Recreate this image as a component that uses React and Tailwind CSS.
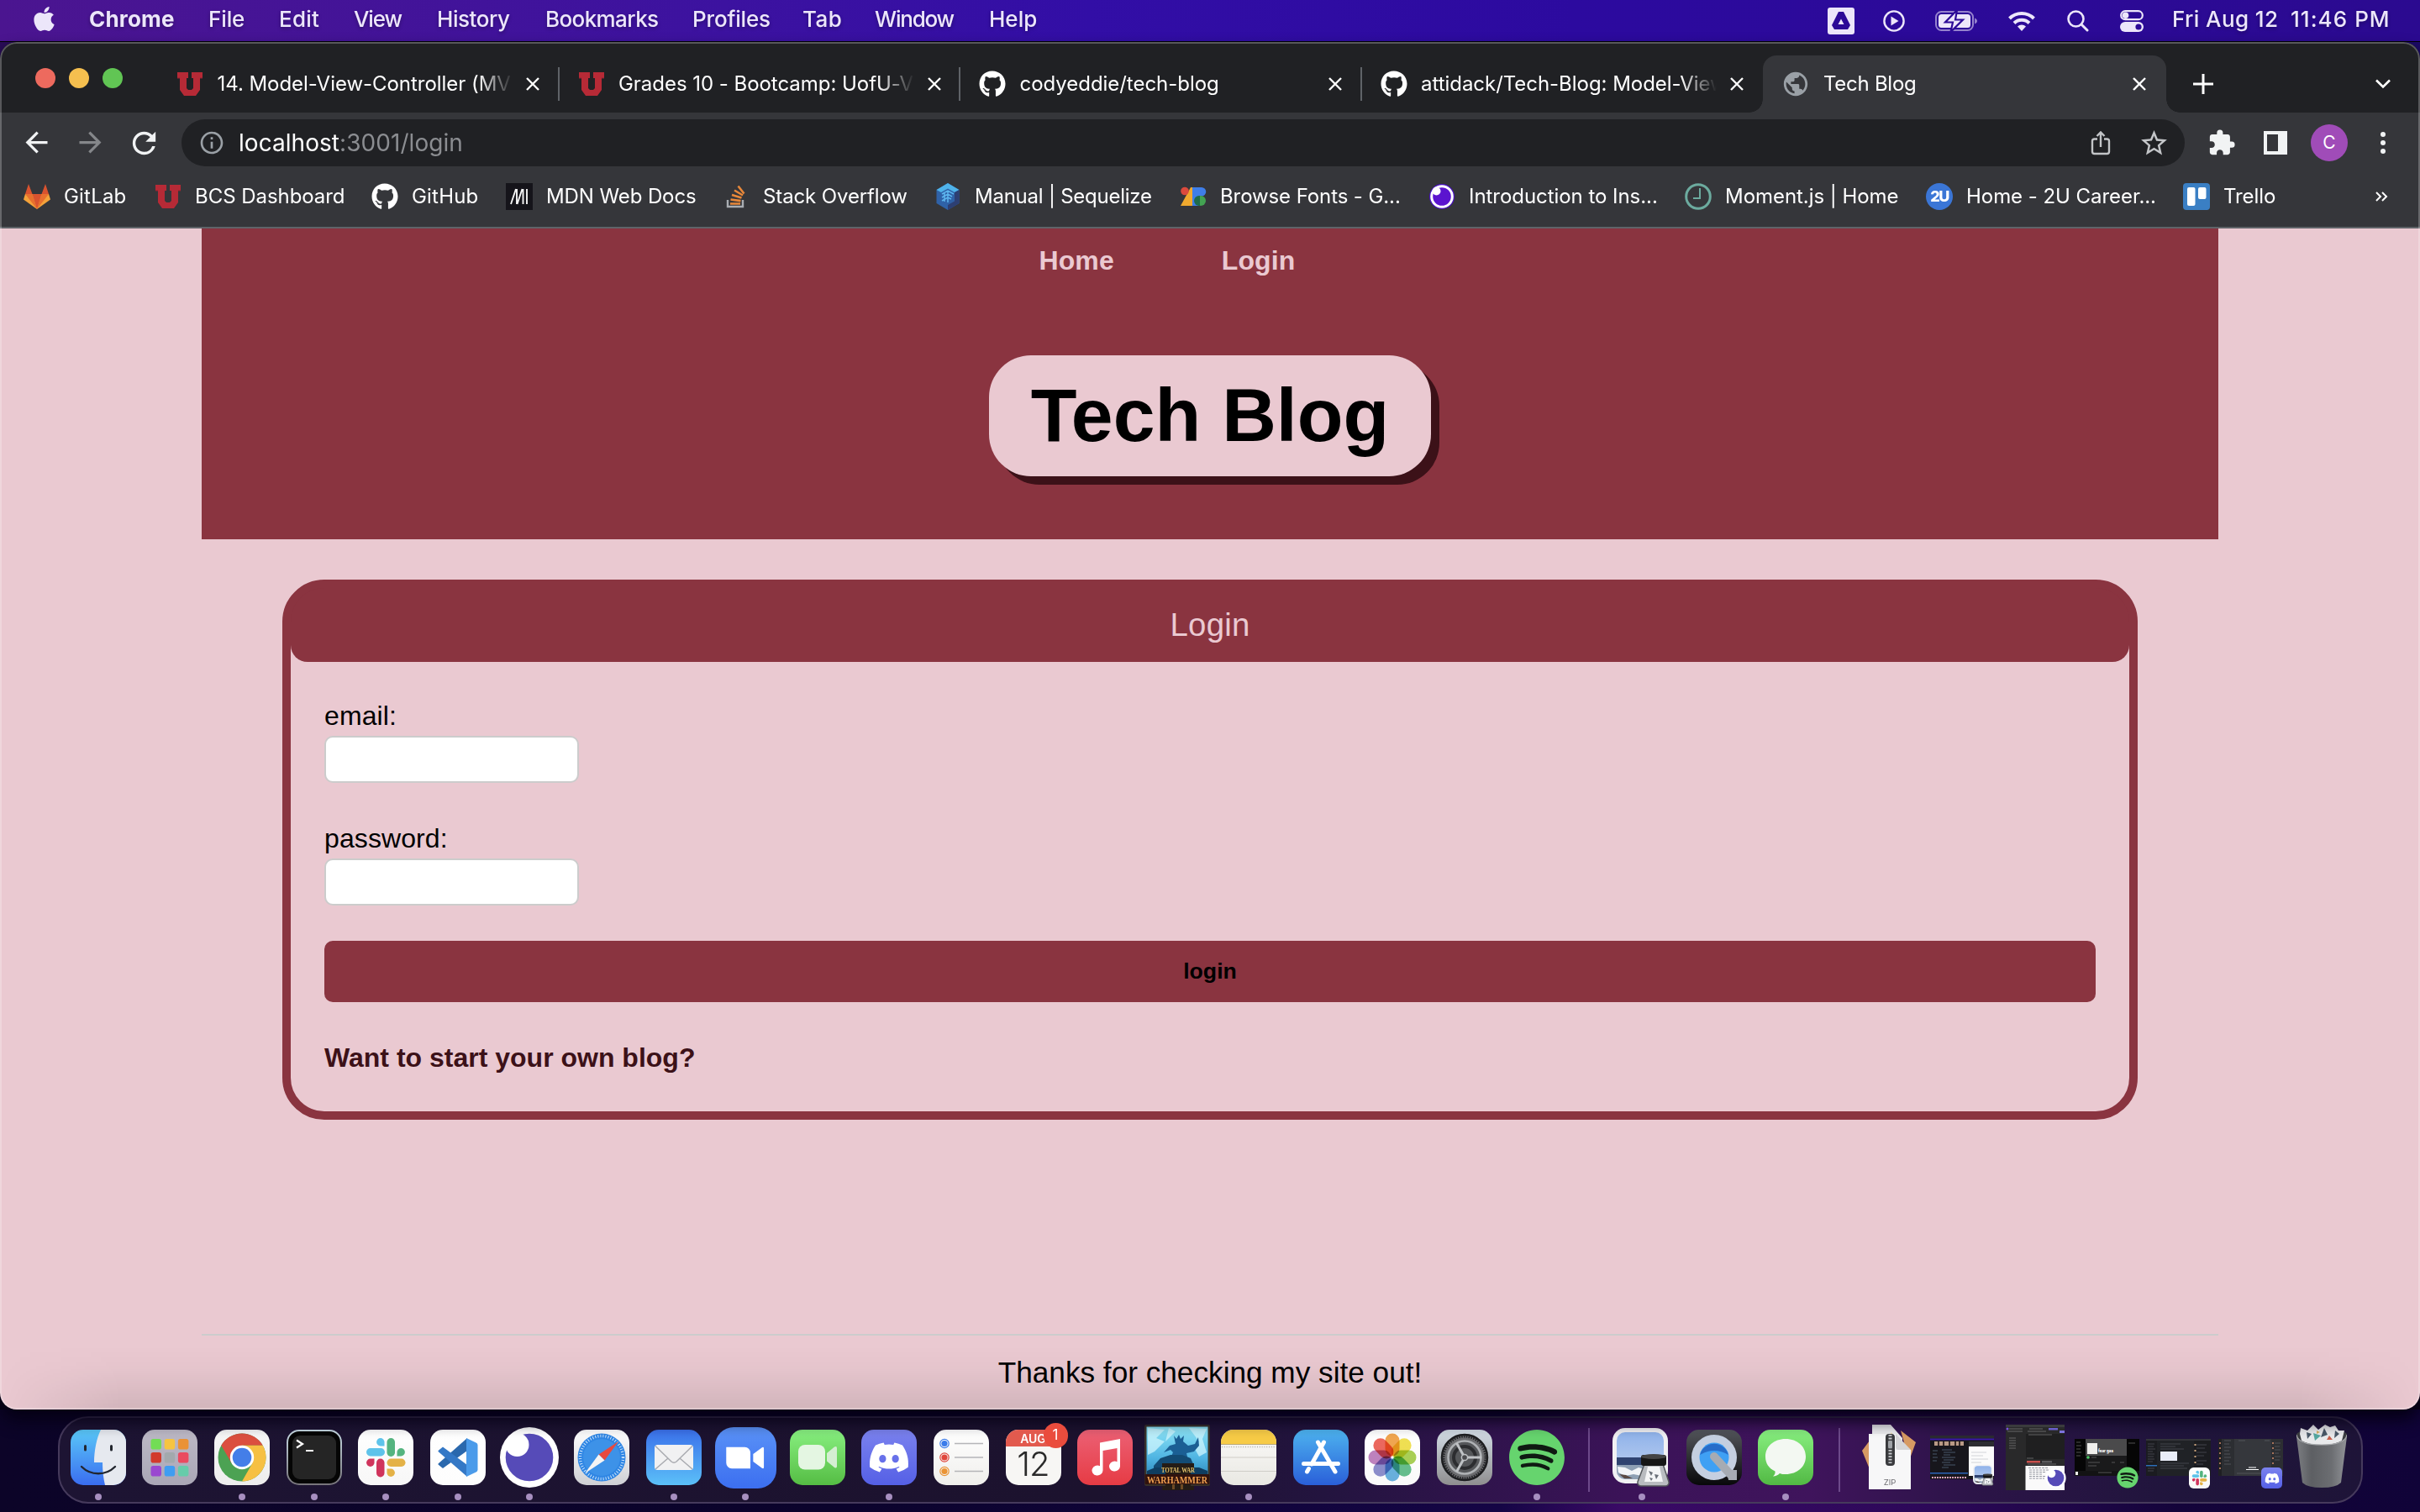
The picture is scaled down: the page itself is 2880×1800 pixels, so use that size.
import React from 'react';
import { FaApple, FaGithub, FaDiscord, FaSpotify } from 'react-icons/fa';
import { MdArrowBack, MdArrowForward, MdRefresh, MdInfoOutline, MdStarBorder, MdExtension, MdPublic } from 'react-icons/md';

/* ---------- small brand marks ---------- */
function UtahU({ className }) {
  return (
    <svg viewBox="0 0 30 28" preserveAspectRatio="none" className={className}>
      <path fill="#b62a36" d="M0 0h13v7h-2v12l2 2h4l2-2V7h-2V0h13v7h-3v14l-5 7H8l-5-7V7H0z" />
      <path stroke="#8f2330" strokeWidth="1" fill="none" d="M0 7h3M27 7h3" />
    </svg>
  );
}

function GitLabMark() {
  return (
    <svg viewBox="0 0 32 30" className="h-[30px] w-8">
      <path fill="#f4a23a" d="M2 12 0 18.500 16 30 32 18.500 30 12z" />
      <path fill="#e8702e" d="M2 12h8.500L16 30zM30 12h-8.500L16 30z" />
      <path fill="#d9532f" d="M10.500 12h11L16 30zM6 0l4.500 12H2zM26 0l-4.500 12H30z" />
    </svg>
  );
}

function MdnMark() {
  return (
    <svg viewBox="0 0 32 32" className="h-8 w-8">
      <rect width="32" height="32" fill="#15141a" />
      <path stroke="#f4f4f4" strokeWidth="1.900" fill="none" d="M6 25 12 7M13 7v18M13.500 25 19.500 7M20.500 7v18M25 7v18" />
    </svg>
  );
}

function StackMark() {
  return (
    <svg viewBox="0 0 32 32" className="h-8 w-8">
      <path stroke="#a9adb2" strokeWidth="2.400" fill="none" d="M6 20v8h18v-8" />
      <path stroke="#e8883a" strokeWidth="2.600" fill="none" d="M9 24.500h12M9.500 19.500l12 1.600M11 14l11.500 3.600M14 8.500l10 6M18.500 3.500l7 9" />
    </svg>
  );
}

function SequelizeMark() {
  return (
    <svg viewBox="0 0 28 32" className="h-8 w-7">
      <path fill="#2f62a8" d="M14 0 27.500 8v16L14 32 .5 24V8z" />
      <path fill="#4fb3ea" d="M14 0 27.500 8 22 11 14 6.500 6 11 .5 8z" />
      <path fill="#2d3f73" d="M27.500 8v16L14 32v-6l8-4.500V11z" />
      <path fill="none" stroke="#5cb5ee" strokeWidth="1.500" d="M7 13l7-4 7 4M7 17l7-4 5 3M7 21l7-4 4 2M10 12v10M14 9v14" />
    </svg>
  );
}

function GoogleFontsMark() {
  return (
    <svg viewBox="0 0 32 24" className="h-6 w-8">
      <path fill="#f0a92e" d="M13 1h4v22H1z" />
      <circle cx="6" cy="5.500" r="4.800" fill="#dc4a3d" />
      <path fill="#3f7ee8" d="M15 1h9v22h-9z" />
      <path fill="#3f7ee8" d="M24 1h2a5.200 5.200 0 0 1 0 10.500h-2z" />
      <ellipse cx="25" cy="17" rx="6" ry="6" fill="#43a352" />
      <path fill="#1f6b4a" d="M24 11h-1a6 6 0 0 0 0 12h1z" />
    </svg>
  );
}

function InsomniaSmall() {
  return (
    <svg viewBox="0 0 32 32" className="h-8 w-8">
      <circle cx="16" cy="16" r="15" fill="#4a12c4" />
      <circle cx="16" cy="16" r="12.300" fill="#5b14cf" stroke="#fff" strokeWidth="3" />
      <circle cx="9.500" cy="9.500" r="5" fill="#fff" />
    </svg>
  );
}

function MomentMark() {
  return (
    <svg viewBox="0 0 32 32" className="h-8 w-8">
      <circle cx="16" cy="16" r="14.300" fill="#35363a" stroke="#6cab9f" strokeWidth="3" />
      <path fill="none" stroke="#6cab9f" strokeWidth="2" d="M18 6v12h-8" />
    </svg>
  );
}

function TwoUMark() {
  return (
    <div className="flex h-8 w-8 items-center justify-center rounded-full bg-[#3b76d6] text-[18px] font-extrabold tracking-[-1.5px] text-white">2U</div>
  );
}

function TrelloMark() {
  return (
    <svg viewBox="0 0 32 32" className="h-8 w-8">
      <rect width="32" height="32" rx="4" fill="#3a7fc4" />
      <rect x="5" y="5" width="9.500" height="22" rx="2" fill="#fff" />
      <rect x="18" y="5" width="9.500" height="14" rx="2" fill="#fff" />
    </svg>
  );
}

/* ---------- menu bar ---------- */
const menus = [
  ['Chrome', 'w-[142px] font-bold tracking-[0.19px]'],
  ['File', 'w-[84px] font-medium tracking-[-0.1px]'],
  ['Edit', 'w-[89px] font-medium tracking-[0.2px]'],
  ['View', 'w-[99px] font-medium tracking-[-1.1px]'],
  ['History', 'w-[129px] font-medium tracking-[-0.45px]'],
  ['Bookmarks', 'w-[175px] font-medium tracking-[-0.6px]'],
  ['Profiles', 'w-[131px] font-medium tracking-[-0.18px]'],
  ['Tab', 'w-[86px] font-medium tracking-[0.5px]'],
  ['Window', 'w-[136px] font-medium tracking-[-1.2px]'],
  ['Help', 'font-medium'],
];

function MenuBar() {
  return (
    <div className="flex h-[49px] items-center bg-[linear-gradient(90deg,#4b1590_0%,#3c12a0_30%,#320ea6_45%,#2c0a9f_65%,#2b0a90_100%)] pb-[4px] text-[26px] text-[#ece6fa] [text-shadow:0_2px_4px_rgba(0,0,0,0.3)]">
      <FaApple className="ml-[38px] h-[33px] w-[29px]" />
      <div className="ml-[39px] flex whitespace-nowrap">
        {menus.map(([t, c]) => (
          <span key={t} className={c}>{t}</span>
        ))}
      </div>
      <div className="ml-auto flex items-center whitespace-nowrap">
        <svg viewBox="0 0 32 32" className="mt-1 h-8 w-8">
          <rect width="32" height="32" rx="3" fill="#ece6fa" />
          <path fill="#2c0a97" d="M13 5h6l8 16-3 5H8l-3-5zM16 13.500l-3.500 6.500h7z" fillRule="evenodd" />
        </svg>
        <svg viewBox="0 0 26 26" className="ml-[34px] mt-1 h-[26px] w-[26px]">
          <circle cx="13" cy="13" r="11.600" fill="none" stroke="#ece6fa" strokeWidth="2.400" />
          <path fill="#ece6fa" d="M9.500 7.500v11l9-5.500z" />
        </svg>
        <svg viewBox="0 0 50 24" className="ml-9 mt-1 h-6 w-[50px]">
          <rect x="1" y="1" width="44" height="22" rx="6.500" fill="none" stroke="#ece6fa" strokeOpacity=".55" strokeWidth="2" />
          <rect x="4" y="4" width="38" height="16" rx="3.500" fill="#ece6fa" />
          <path d="M47 8.500c4 1.500 4 5.500 0 7z" fill="#ece6fa" fillOpacity=".55" />
          <path d="M26-1 12 13.500h9L18.500 25 33 10.500h-9z" fill="#ece6fa" stroke="#2c0a97" strokeWidth="2.200" />
        </svg>
        <svg viewBox="0 0 32 24" className="ml-[37px] mt-1 h-6 w-8">
          <path fill="none" stroke="#ece6fa" strokeWidth="4" d="M1.500 9a20.500 20.500 0 0 1 29 0M7 14.500a12.700 12.700 0 0 1 18 0" />
          <path fill="#ece6fa" d="m16 24-5-5.500a7.500 7.500 0 0 1 10 0z" />
        </svg>
        <svg viewBox="0 0 26 26" className="ml-[38px] mt-1 h-[26px] w-[26px]">
          <circle cx="10.500" cy="10.500" r="9" fill="none" stroke="#ece6fa" strokeWidth="2.600" />
          <path stroke="#ece6fa" strokeWidth="3" strokeLinecap="round" d="m17 17 7 7" />
        </svg>
        <svg viewBox="0 0 28 26" className="ml-[37px] mt-1 h-[26px] w-7">
          <rect x="1.200" y="1.200" width="25.600" height="10" rx="5" fill="none" stroke="#ece6fa" strokeWidth="2.200" />
          <circle cx="6.500" cy="6.200" r="3.800" fill="#ece6fa" />
          <rect y="14" width="28" height="12" rx="6" fill="#ece6fa" />
          <circle cx="22" cy="20" r="3.600" fill="#2c0a97" />
        </svg>
        <span className="ml-[34px] w-[141px] font-medium tracking-[0.4px]">Fri Aug 12</span>
        <span className="w-[154px] font-medium tracking-[1.05px]">11:46 PM</span>
      </div>
    </div>
  );
}

/* ---------- browser chrome ---------- */
function CloseX() {
  return (
    <svg viewBox="0 0 18 18" className="h-[18px] w-[18px]">
      <path stroke="#fff" strokeWidth="2.400" d="M2 2l14 14M16 2 2 16" />
    </svg>
  );
}

const ghTab = <FaGithub className="h-8 w-8" />;
const uTab = <UtahU className="h-7 w-[30px]" />;
const tabs = [
  [uTab, '14. Model-View-Controller (MV'],
  [uTab, 'Grades 10 - Bootcamp: UofU-V'],
  [ghTab, 'codyeddie/tech-blog'],
  [ghTab, 'attidack/Tech-Blog: Model-View'],
];

function TabStrip() {
  return (
    <div className="flex h-[84px] bg-[#202124] text-[24px] text-white">
      <div className="flex w-[188px] items-center gap-4 pl-[42px] pt-[2px]">
        <span className="h-6 w-6 rounded-full bg-[#ed6a5e]" />
        <span className="h-6 w-6 rounded-full bg-[#f5bf4f]" />
        <span className="h-6 w-6 rounded-full bg-[#61c554]" />
      </div>
      <div className="flex h-[68px] self-end">
        {tabs.map(([icon, t], i) => (
          <div key={t} className="flex w-[477.5px] items-center">
            <div className="ml-[22px] flex w-8 justify-center">{icon}</div>
            <div className="ml-[16.5px] w-[352px] overflow-hidden whitespace-nowrap tracking-[-0.04px] [mask-image:linear-gradient(to_right,#000_88%,transparent)]">{t}</div>
            <div className="ml-[14.5px]"><CloseX /></div>
            {i < 3 && <div className="ml-auto h-10 w-[2px] bg-[#5f6368]" />}
          </div>
        ))}
        <div className="relative flex w-[480px] items-center rounded-t-[16px] bg-[#35363a]">
          <div className="absolute bottom-0 left-[-16px] h-4 w-4 bg-[radial-gradient(circle_at_0_0,transparent_15.500px,#35363a_16px)]" />
          <div className="absolute bottom-0 right-[-16px] h-4 w-4 bg-[radial-gradient(circle_at_100%_0,transparent_15.500px,#35363a_16px)]" />
          <MdPublic className="ml-[22px] h-[34px] w-[34px] text-[#9aa0a6]" />
          <div className="ml-4 w-[351px] tracking-[-0.27px]">Tech Blog</div>
          <div className="ml-4"><CloseX /></div>
        </div>
        <div className="flex items-center">
          <svg viewBox="0 0 24 24" className="ml-8 h-6 w-6">
            <path stroke="#fff" strokeWidth="3" d="M12 0v24M0 12h24" />
          </svg>
          <svg viewBox="0 0 20 12" className="ml-[192px] h-3 w-5">
            <path fill="none" stroke="#fff" strokeWidth="2.600" d="m2 1.500 8 8 8-8" />
          </svg>
        </div>
      </div>
    </div>
  );
}

function Toolbar() {
  return (
    <div className="flex h-14 items-center">
      <div className="ml-[11px] flex text-[#f1f3f4]">
        <div className="flex w-16 justify-center"><MdArrowBack className="h-[39px] w-[39px]" /></div>
        <div className="flex w-16 justify-center"><MdArrowForward className="h-[39px] w-[39px] text-[#85878a]" /></div>
        <div className="flex w-16 justify-center"><MdRefresh className="h-[41px] w-[41px]" /></div>
      </div>
      <div className="ml-[13px] flex h-14 w-[2384px] items-center rounded-full bg-[#202124] pl-5 text-[28px] tracking-[0.05px]">
        <MdInfoOutline className="h-8 w-8 text-[#9aa0a6]" />
        <div className="ml-4 text-[#8b8d91]"><span className="text-white">localhost</span>:3001/login</div>
        <svg viewBox="0 0 24 30" className="ml-auto h-[30px] w-6">
          <path fill="none" stroke="#c3c5c8" strokeWidth="2.400" d="M8 10.500H4.500a2.500 2.500 0 0 0-2.500 2.500v12.500A2.500 2.500 0 0 0 4.500 28h15a2.500 2.500 0 0 0 2.500-2.500V13a2.500 2.500 0 0 0-2.500-2.500H16M12 20V3M7.500 7 12 2.500 16.500 7" />
        </svg>
        <MdStarBorder className="ml-[33px] mr-[18px] h-[37px] w-[37px] text-[#c3c5c8]" />
      </div>
      <div className="ml-[12px] flex items-center">
        <div className="flex w-16 justify-center"><MdExtension className="h-[34px] w-[34px] text-[#f1f3f4]" /></div>
        <div className="flex w-16 justify-center">
          <svg viewBox="0 0 30 28" className="h-7 w-[30px]">
            <path fill="#f1f3f4" fillRule="evenodd" d="M1 0h28v28H1zM5 4v20h13V4z" />
          </svg>
        </div>
        <div className="flex w-16 justify-center">
          <div className="flex h-11 w-11 items-center justify-center rounded-full bg-[#a04cb8] text-[21px] text-white">C</div>
        </div>
        <div className="flex w-16 flex-col items-center gap-1">
          <span className="h-[6px] w-[6px] rounded-full bg-[#f1f3f4]" />
          <span className="h-[6px] w-[6px] rounded-full bg-[#f1f3f4]" />
          <span className="h-[6px] w-[6px] rounded-full bg-[#f1f3f4]" />
        </div>
      </div>
    </div>
  );
}

const bookmarks = [
  [<GitLabMark />, 'GitLab', 'w-[156px] tracking-[0.2px]'],
  [<UtahU className="h-7 w-[30px]" />, 'BCS Dashboard', 'w-[258px] tracking-[-0.05px]'],
  [<FaGithub className="h-8 w-8" />, 'GitHub', 'w-[160px] tracking-[0.2px]'],
  [<MdnMark />, 'MDN Web Docs', 'w-[258px] tracking-[-0.1px]'],
  [<StackMark />, 'Stack Overflow', 'w-[252px] tracking-[-0.12px]'],
  [<SequelizeMark />, 'Manual | Sequelize', 'w-[292px] tracking-[-0.24px]'],
  [<GoogleFontsMark />, 'Browse Fonts - G...', 'w-[296px] tracking-[-0.1px]'],
  [<InsomniaSmall />, 'Introduction to Ins...', 'w-[305px] tracking-[-0.05px]'],
  [<MomentMark />, 'Moment.js | Home', 'w-[287px] tracking-[-0.05px]'],
  [<TwoUMark />, 'Home - 2U Career...', 'w-[306px] tracking-[-0.05px]'],
  [<TrelloMark />, 'Trello', 'w-[228px] tracking-[-0.1px]'],
];

function BookmarkBar() {
  return (
    <div className="flex h-[71px] items-center whitespace-nowrap pl-7 text-[24px] text-white">
      {bookmarks.map(([icon, t, c]) => (
        <div key={t} className={'flex items-center gap-4 ' + c}>
          <div className="flex w-8 justify-center">{icon}</div>
          <span>{t}</span>
        </div>
      ))}
      <svg viewBox="0 0 16 12" className="h-3 w-4">
        <path fill="none" stroke="#fff" strokeWidth="2" d="m2 1 5 5-5 5M9 1l5 5-5 5" />
      </svg>
    </div>
  );
}

/* ---------- web page ---------- */
function Page() {
  return (
    <div className="relative flex flex-1 flex-col items-center bg-[#eac9d1] font-['Liberation_Sans',Arial,sans-serif] text-[32px] text-black">
      <header className="flex h-[370px] w-[2400px] flex-col items-center bg-[#8a3440]">
        <nav className="flex h-[76px] w-full items-center gap-[128px] pl-[996.5px] font-bold tracking-[0.1px] text-[#eac9d1]">
          <a>Home</a>
          <a>Login</a>
        </nav>
        <h1 className="mt-[75px] flex h-36 w-[526px] items-center justify-center whitespace-nowrap rounded-[50px] bg-[#eac9d1] text-[89.6px] font-bold leading-none shadow-[10px_10px_0_#3c1118]">Tech Blog</h1>
      </header>

      <main className="mt-12 h-[643px] w-[2208px] overflow-hidden rounded-[50px] border-[10px] border-[#8a3440] bg-[linear-gradient(to_bottom,#8a3440_60px,transparent_60px)] bg-no-repeat">
        <h2 className="flex h-[88px] items-center justify-center rounded-b-[20px] bg-[#8a3440] text-[38.4px] tracking-[0.2px] text-[#eac9d1]">Login</h2>
        <form className="flex flex-col items-start px-10 pt-[42px]">
          <label className="h-11 leading-[44px] tracking-[0.1px]">email:</label>
          <input className="mt-[2px] h-14 w-[303px] rounded-[10px] border-2 border-[#ccc] bg-white" />
          <label className="mt-11 h-11 leading-[44px] tracking-[0.1px]">password:</label>
          <input className="mt-[2px] h-14 w-[303px] rounded-[10px] border-2 border-[#ccc] bg-white" />
          <button type="button" className="mt-[42px] h-[73px] w-full rounded-[10px] bg-[#8a3440] pb-[2px] text-[26.67px] font-bold">login</button>
          <a className="mt-11 h-11 font-bold leading-[44px] text-[#3c1118]">Want to start your own blog?</a>
        </form>
      </main>

      <footer className="mt-[255px] w-[2400px] border-t-2 border-[#ccc] pt-[22px] text-center text-[35.2px] leading-[44px]">
        Thanks for checking my site out!
      </footer>
      <div className="absolute inset-x-0 bottom-0 h-[76px] bg-[linear-gradient(to_bottom,transparent,rgba(0,0,0,0.02)_35%,rgba(0,0,0,0.1))] [mask-image:linear-gradient(to_right,transparent,#000_5%,#000_95%,transparent)]" />
    </div>
  );
}

/* ---------- dock icons (66 unit grid) ---------- */
function Tile({ id, from, to, children, size = 'h-[66px] w-[66px]', rx = 15 }) {
  return (
    <svg viewBox="0 0 66 66" className={size}>
      <defs>
        <linearGradient id={id} x1="0" y1="0" x2="0" y2="1">
          <stop offset="0" stopColor={from} />
          <stop offset="1" stopColor={to} />
        </linearGradient>
      </defs>
      <rect width="66" height="66" rx={rx} fill={`url(#${id})`} />
      {children}
    </svg>
  );
}

function Finder() {
  return (
    <Tile id="finder" from="#5ac8f8" to="#3a6df0">
      <path fill="#e6e9ef" d="M36 0h15a15 15 0 0 1 15 15v36a15 15 0 0 1-15 15H41c-2-8-3-17-3-27H28C28 25 31 10 36 0z" />
      <path stroke="#22262e" strokeWidth="3" strokeLinecap="round" fill="none" d="M17.500 19.500v4.500M48.500 19.500v4.500" />
      <path stroke="#22262e" strokeWidth="2.400" strokeLinecap="round" fill="none" d="M13 44c11 11 29 11 40 0" />
    </Tile>
  );
}

const padColors = ['#72dd55', '#f6c441', '#ea9236', '#d23a2c', '#a3a9ad', '#ea4b60', '#9a48d0', '#3f9df2', '#66ccaa'];
function Launchpad() {
  return (
    <Tile id="launch" from="#bdb9c6" to="#aaa7b6">
      {padColors.map((c, i) => (
        <rect key={c} x={10.500 + (i % 3) * 16.200} y={11 + Math.floor(i / 3) * 16} width="12.500" height="12.500" rx="2.800" fill={c} />
      ))}
    </Tile>
  );
}

function Chrome() {
  return (
    <Tile id="chrome" from="#f7f7f7" to="#ededed">
      <circle cx="33" cy="33" r="28.500" fill="#4ca253" />
      <path fill="#db4f3f" d="M8.300 18.750A28.500 28.500 0 0 1 57.700 18.750H33L20.660 40.100z" />
      <path fill="#f6c043" d="M57.700 18.750A28.500 28.500 0 0 1 33 61.500L45.300 40.100 33 18.750z" />
      <circle cx="33" cy="33" r="14.200" fill="#fff" />
      <circle cx="33" cy="33" r="11.300" fill="#447ee8" />
    </Tile>
  );
}

function Terminal() {
  return (
    <Tile id="term" from="#c9dce6" to="#77747a">
      <rect x="2" y="2" width="62" height="62" rx="13" fill="#050505" />
      <rect x="7" y="7" width="52" height="52" rx="9" fill="#252525" />
      <path fill="none" stroke="#fff" strokeWidth="2.200" d="m12 12.500 7 4.500-7 4.500M23 25h9" />
    </Tile>
  );
}

function SlackShapes() {
  return (
    <>
      <g fill="#5fc3ea"><rect x="10" y="22" width="22" height="9.500" rx="4.700" /><path d="M31.500 19.500h-4.700a4.700 4.700 0 1 1 4.700-4.700z" /></g>
      <g fill="#55b47f"><rect x="34.500" y="10" width="9.500" height="22" rx="4.700" /><path d="M46.500 31.500v-4.700a4.700 4.700 0 1 1 4.700 4.700z" /></g>
      <g fill="#e4b247"><rect x="34.500" y="34.500" width="22" height="9.500" rx="4.700" /><path d="M34.500 46.500h4.700a4.700 4.700 0 1 1-4.700 4.700z" /></g>
      <g fill="#d0345c"><rect x="22" y="34.500" width="9.500" height="22" rx="4.700" /><path d="M19.500 34.500v4.700a4.700 4.700 0 1 1-4.700-4.700z" /></g>
    </>
  );
}
function Slack({ id = 'slack', size }) {
  return <Tile id={id} from="#ffffff" to="#f7f7f7" size={size}><SlackShapes /></Tile>;
}

function VsCode() {
  return (
    <Tile id="vsc" from="#ffffff" to="#fdfdfd">
      <path fill="#2a68ad" d="M44 10v15L15 46l-5.500-4.500v-1z" />
      <path fill="#3478c6" d="M9.500 25 15 20.500 44 42v14L9.500 26z" />
      <path fill="#4b9bea" d="m43 10 11.500 5.500a3 3 0 0 1 2 2.700v29.600a3 3 0 0 1-2 2.700L43 56z" />
    </Tile>
  );
}

function Insomnia({ size = 'h-[72px] w-[70px]' }) {
  return (
    <svg viewBox="0 0 70 72" className={size}>
      <ellipse cx="35" cy="36" rx="35" ry="36" fill="#fff" />
      <circle cx="35" cy="36" r="28.300" fill="#564bb8" />
      <circle cx="20.500" cy="21" r="14" fill="#fff" />
    </svg>
  );
}

function Safari() {
  return (
    <Tile id="safari" from="#ffffff" to="#cfd0d4">
      <circle cx="33" cy="33" r="28.500" fill="#2f86e4" />
      <circle cx="33" cy="33" r="25.500" fill="none" stroke="#d8ecff" strokeWidth="3.500" strokeDasharray="0.900 2.200" />
      <circle cx="33" cy="33" r="22" fill="#3d92e8" />
      <path fill="#e8493e" d="M53 14 29.500 29.500l7 7z" />
      <path fill="#f4f4f4" d="M13 52l16.500-22.500 7 7z" />
    </Tile>
  );
}

function Mail() {
  return (
    <Tile id="mail" from="#3a70ea" to="#5bc0f8">
      <rect x="10" y="18" width="46" height="30" rx="3.500" fill="#f1f1f2" />
      <path fill="none" stroke="#a9abb0" strokeWidth="1.500" d="M11 19.500 30 38q3 2.500 6 0l19-18.500M11 47l15-13M55 47 40 34" />
    </Tile>
  );
}

function Zoom() {
  return (
    <Tile id="zoom" from="#5a92f7" to="#3c6ff0" size="h-[73px] w-[73px]" rx={20}>
      <path fill="#fff" d="M12 21.500h20a6 6 0 0 1 6 6v17H18a6 6 0 0 1-6-6zM41 29l9.500-7q2-1.200 2 1v20q0 2.200-2 1L41 37z" />
    </Tile>
  );
}

function FaceTime() {
  return (
    <Tile id="ft" from="#88ef80" to="#55bd44">
      <rect x="10" y="18" width="32" height="29.500" rx="8" fill="#e4f6e2" />
      <path fill="#d4eed2" d="m44 28 9-7.500q3-1.500 3 1.500v21.500q0 3-3 1.500L44 37.500z" />
    </Tile>
  );
}

function Discord({ box = 'h-[66px] w-[66px] rounded-[15px]', glyph = 'h-[50px] w-[50px]' }) {
  return (
    <div className={'flex items-center justify-center bg-[linear-gradient(#7b82ee,#5560e6)] ' + box}>
      <FaDiscord className={'text-white ' + glyph} />
    </div>
  );
}

function Reminders() {
  return (
    <Tile id="rem" from="#ffffff" to="#f0efec">
      {['#3a7bea', '#e0463c', '#ea9436'].map((c, i) => (
        <g key={c}>
          <circle cx="13" cy={16.500 + i * 16.500} r="5.200" fill="none" stroke={c} strokeWidth="1.200" />
          <circle cx="13" cy={16.500 + i * 16.500} r="3.600" fill={c} />
          <path stroke="#b5b5b8" strokeWidth="1.400" d={`M25 ${16.500 + i * 16.500}h34`} />
        </g>
      ))}
    </Tile>
  );
}

function Calendar() {
  return (
    <div className="relative">
      <div className="h-[66px] w-[66px] overflow-hidden rounded-[15px] bg-[#f7f6f4] text-center">
        <div className="h-5 bg-[#e25a4e] text-[14px] font-semibold leading-[21px] text-white">AUG</div>
        <div className="text-[40px] font-light leading-[42px] tracking-[-1px] text-[#2a2a2a]">12</div>
      </div>
      <div className="absolute right-[-8px] top-[-8px] flex h-[30px] w-[29px] items-center justify-center rounded-full bg-[#ea4c3d] text-[17px] text-white">1</div>
    </div>
  );
}

function Music() {
  return (
    <div className="flex h-[66px] w-[66px] items-center justify-center rounded-[15px] bg-[linear-gradient(#ec6175,#e63b44)]">
      <svg viewBox="0 0 36 44" className="h-11 w-9">
        <path fill="#fff" d="M12 4.500 36 0v32.500a6.500 6 0 1 1-3.500-5.300V11L15.500 14v23.500a6.500 6 0 1 1-3.500-5.300z" />
      </svg>
    </div>
  );
}

function Warhammer() {
  return (
    <svg viewBox="0 0 80 80" className="h-20 w-20">
      <defs>
        <linearGradient id="wh" x1="0" y1="0" x2="0" y2="1">
          <stop offset="0" stopColor="#8fe6f7" /><stop offset=".6" stopColor="#4fb4e2" /><stop offset="1" stopColor="#2b86b8" />
        </linearGradient>
      </defs>
      <rect x="1" y="1" width="78" height="73" rx="2" fill="#39312a" />
      <rect x="3.500" y="3.500" width="73" height="62" fill="url(#wh)" />
      <path fill="#d4f8ff" opacity=".7" d="M5 5l20 2-10 10 10 4-12 12-8 4zM54 5l21 1-5 12 5 16-9 5-5-9 5-9zM30 5l8 4-12 12z" />
      <path fill="#1b5f94" d="M36 14l3 4 3-5 2 5 4-4-1 7 6 5 8-2 4-8 1 10-6 7-9 2 2 8H31l4-9-3-3-8 3 7-8 7-2z" />
      <path fill="#134b74" d="M12 50l8-9 12-4 14 0 10 4 4 9v14H12z" />
      <path fill="#0f3d60" d="M4 56l10-4h52l10 4v9H4z" />
      <path fill="#241c16" d="M22 47h38v8h-4v19h4v5H22v-5h4V55h-4z" />
      <path fill="#6e4a24" d="M34 72h3v6h-3zM44 72h3v6h-3z" />
      <rect x="1.500" y="60" width="77" height="12" rx="1" fill="#31130e" />
      <text x="41" y="58" textAnchor="middle" fontFamily="Liberation Serif, serif" fontWeight="bold" fontSize="8" fill="#e6c56c" textLength="40" lengthAdjust="spacingAndGlyphs">TOTAL WAR</text>
      <text x="40" y="70.500" textAnchor="middle" fontFamily="Liberation Serif, serif" fontWeight="bold" fontSize="13" fill="#f0a050" textLength="72" lengthAdjust="spacingAndGlyphs">WARHAMMER</text>
    </svg>
  );
}

function Notes() {
  return (
    <Tile id="notes" from="#fbfaf8" to="#e9e8e3">
      <path fill="#f7cb46" d="M0 17V15A15 15 0 0 1 15 0h36a15 15 0 0 1 15 15v2z" />
      <path stroke="#b9a877" strokeWidth="1" d="M0 17.500h66" />
      <path stroke="#b0aea8" strokeWidth="1.500" strokeDasharray="1 1.800" d="M1 20.500h64" />
      <path stroke="#cfcdc8" strokeWidth="1.200" d="M0 33h66M0 49.500h66" />
    </Tile>
  );
}

function AppStore() {
  return (
    <Tile id="as" from="#4db3ef" to="#2a5fd9">
      <path stroke="#fff" strokeWidth="5" strokeLinecap="round" fill="none" d="M36.500 15 22 41M29.500 15 50 50M12.500 40.500h41M18.500 46.500l-2 3.500" />
    </Tile>
  );
}

const petals = ['#f09a37', '#eedc3a', '#9ecb3e', '#53b87f', '#55a8dc', '#7d80c8', '#b672b6', '#ea5348'];
function Photos() {
  return (
    <Tile id="photos" from="#ffffff" to="#fafafa">
      {petals.map((c, i) => (
        <rect key={c} x="24.500" y="4.500" width="17" height="27" rx="8.500" fill={c} opacity=".88" className="mix-blend-multiply" transform={`rotate(${i * 45} 33 33)`} />
      ))}
    </Tile>
  );
}

function Settings() {
  return (
    <Tile id="set" from="#d3dde6" to="#8f8e8f">
      <circle cx="33" cy="33" r="27" fill="#6c6d70" stroke="#1c1d1f" strokeWidth="2.500" />
      <circle cx="33" cy="33" r="25" fill="none" stroke="#26272a" strokeWidth="3" strokeDasharray="1.600 1.300" />
      <circle cx="33" cy="33" r="19.500" fill="#55575a" stroke="#aeb1b4" strokeWidth="2.600" />
      <circle cx="33" cy="33" r="13" fill="none" stroke="#2c2d30" strokeWidth="4" />
      <path stroke="#bfc2c5" strokeWidth="3" fill="none" d="M33 33h20M33 33 23.500 16M33 33 23.500 50" />
      <circle cx="33" cy="33" r="3.600" fill="#4a4b4e" stroke="#bfc2c5" strokeWidth="1.500" />
    </Tile>
  );
}

function Spotify({ size = 'h-[68px] w-[68px]' }) {
  return (
    <div className="rounded-full bg-[radial-gradient(#0f1a12_60%,transparent_62%)]">
      <FaSpotify className={'text-[#66d46e] ' + size} />
    </div>
  );
}

function Preview({ size = 'h-[72px] w-[70px]' }) {
  return (
    <svg viewBox="0 0 70 72" className={size}>
      <defs>
        <linearGradient id="sky" x1="0" y1="0" x2="0" y2="1">
          <stop offset="0" stopColor="#8fb2ea" /><stop offset="1" stopColor="#c3d4f0" />
        </linearGradient>
      </defs>
      <rect y="1" width="66" height="66" rx="15" fill="#f1f1f3" />
      <rect x="5" y="6" width="56" height="56" rx="10" fill="url(#sky)" />
      <path fill="#2f4370" d="M5 36h56v9H5z" />
      <path fill="#8ea0b4" d="M5 45h56v7a10 10 0 0 1-10 10H15A10 10 0 0 1 5 52z" />
      <path fill="#f2f5f8" d="M6 47l9 1 8 4 8-4 10 3 8-3v8l-14 2-10-2-10 2-8-4z" />
      <path fill="#5a4a44" d="M8 56l8 1 8 4H14z" />
      <path fill="#b9bcc0" d="M38 44h22l7 21a4 4 0 0 1-4 5H34a4 4 0 0 1-4-5z" stroke="#55585c" strokeWidth="1.500" />
      <path fill="#f4f5f6" d="M42 47h14l4 18H38z" />
      <path fill="#6a7078" d="M43 52l5 2-2 4zM50 56l5 1-3 5zM44 60l4 1-2 3z" />
      <rect x="34" y="33" width="30" height="13" rx="3" fill="#161616" />
      <ellipse cx="49" cy="35" rx="15" ry="3" fill="#444" />
    </svg>
  );
}

function QuickTime() {
  return (
    <Tile id="qt" from="#54565c" to="#08080a">
      <circle cx="33" cy="33" r="27" fill="#c5cfe0" />
      <circle cx="33" cy="33" r="17.500" fill="#3fa0f4" />
      <path fill="#123a9e" opacity=".5" d="M16 30a17.500 17.500 0 0 1 34 0q-17-10-34 0z" />
      <path stroke="#a6abb3" strokeWidth="10" strokeLinecap="round" d="m33 32 20 22" />
      <path fill="#a6abb3" d="M48 48h12v12H50z" />
    </Tile>
  );
}

function Messages() {
  return (
    <Tile id="msg" from="#88ef80" to="#52b944">
      <path fill="#f3f8f2" d="M33 11c14 0 24 9 24 21s-10 21-24 21c-3 0-5 0-7-1-2 2-5 3.500-8 3.500 2-1.500 3-4 2.500-6C13 46 9 40 9 32c0-12 10-21 24-21z" />
    </Tile>
  );
}

function Zip() {
  return (
    <svg viewBox="0 0 64 80" className="mr-[9px] h-20 w-16">
      <path fill="#d79a63" d="m0 32 9-12v34zM46 8l18 14-8 22z" />
      <path fill="#ececee" d="M12 1h22l14 16v20H12z" />
      <path fill="#f3d36a" d="m34 10 20 22-12-2z" />
      <path fill="#f7f7f8" d="M8 12h32v19h18v47H8z" />
      <path fill="#d6d6d8" d="m40 12 18 19H44a4 4 0 0 1-4-4z" />
      <rect x="28" y="12" width="11" height="38" rx="4" fill="#3a3b3e" />
      <path stroke="#c8cacd" strokeWidth="4" strokeDasharray="1.800 1.800" d="M33.500 13v34" />
      <rect x="31" y="20" width="5" height="9" rx="2" fill="#9fa2a6" />
      <text x="33" y="72.500" textAnchor="middle" fontFamily="Inter, sans-serif" fontSize="9.500" fill="#6c6c70">ZIP</text>
    </svg>
  );
}

function MiniPreview() {
  return (
    <div className="relative mr-[5px]">
      <svg viewBox="0 0 76 52" className="h-[52px] w-[76px]">
        <rect width="76" height="52" fill="#17161c" />
        <rect width="76" height="3.500" fill="#2a2a30" /><rect y="3.500" width="76" height="2" fill="#3c18a8" />
        <rect x="5" y="7" width="35" height="5" fill="#b99a86" /><path stroke="#3a2c28" strokeWidth="2" d="M10 7v5M16 7v5M23 7v5M30 7v5M35 7v5" />
        <rect x="46" y="7" width="30" height="6" fill="#2c2d31" />
        <rect x="46" y="13" width="30" height="35" fill="#fbfbfb" />
        <path stroke="#c9cbd0" strokeWidth=".8" d="M49 20h18M49 24h14M49 28h20M49 32h12" />
        <path stroke="#56687e" strokeWidth=".8" d="M14 17h12M16 20h14M16 23h8M14 26h16M16 29h12M14 32h10M16 35h14M14 38h8M3 18h6M3 22h5M3 26h6M3 30h5" />
        <rect y="44" width="45" height="1.500" fill="#2c64b8" />
        <path stroke="#d8a0b8" strokeWidth="2" strokeDasharray="2 1" d="M2 50h42" />
      </svg>
      <div className="absolute bottom-[-13px] right-0"><Preview size="h-[36px] w-[25px]" /></div>
    </div>
  );
}

function MiniInsomnia() {
  return (
    <div className="relative mr-[3px]">
      <svg viewBox="0 0 70 78" className="h-[78px] w-[70px]">
        <rect width="70" height="78" fill="#29292a" />
        <rect width="70" height="3" fill="#3a3b3d" />
        <circle cx="2" cy="5" r="1.500" fill="#7a52e0" />
        <rect x="51" y="4" width="11" height="2.500" fill="#6b60cc" /><rect x="64" y="7" width="6" height="3" fill="#7d72dd" />
        <rect x="24" y="11" width="46" height="30" fill="#1f1f20" />
        <path stroke="#777" strokeWidth=".8" d="M4 5h16M28 5h16M2 8h18M26 8h22M27 12h28M4 16h8M4 19h8M4 22h8M4 25h8M4 28h8M25 40h8M26 47h34" />
        <rect x="25" y="43" width="16" height="2.500" fill="#c9504c" /><rect x="43" y="43" width="12" height="2.500" fill="#5a5a5c" />
        <rect x="23.500" y="49" width="46.500" height="29" fill="#fafafa" />
        <path stroke="#8a8d98" strokeWidth=".9" strokeDasharray="3 1" d="M27 51.500h24M28 54h26M28 56.500h20M28 59h16M28 61.500h22M28 64h18" />
      </svg>
      <div className="absolute bottom-[2px] right-[-3px]"><Insomnia size="h-[25px] w-[27px]" /></div>
    </div>
  );
}

function MiniSpotify() {
  return (
    <div className="relative mr-[3px]">
      <svg viewBox="0 0 77 44" className="h-[44px] w-[77px]">
        <rect width="77" height="44" fill="#060606" />
        <rect x="13" width="49" height="20" fill="#4a4a4b" /><rect x="13" y="20" width="49" height="18" fill="#1a1a1b" />
        <rect y="38" width="77" height="6" fill="#131314" />
        <rect x="15" y="5" width="12" height="13" fill="#f0efec" />
        <text x="28" y="16" fontFamily="Inter, sans-serif" fontWeight="800" fontSize="5" fill="#fff" textLength="18" lengthAdjust="spacingAndGlyphs">fear gas</text>
        <circle cx="16" cy="22" r="1.800" fill="#4bc764" />
        <path stroke="#666" strokeWidth=".8" d="M2 4h5M2 8h6M2 12h5M2 16h6M2 20h5M20 22h6M16 28h14M16 32h10M44 28h4M54 28h5M64 5h8M28 40h16" />
        <rect x="1" y="39" width="3" height="4" fill="#eee" />
      </svg>
      <div className="absolute bottom-[-15px] right-[1px]"><Spotify size="h-[26px] w-[26px]" /></div>
    </div>
  );
}

function MiniSlack() {
  return (
    <div className="relative mr-[3px]">
      <svg viewBox="0 0 77 44" className="h-[44px] w-[77px]">
        <rect width="77" height="44" fill="#1b1c20" />
        <rect width="77" height="2" fill="#33343a" />
        <rect x="13" y="2" width="44" height="42" fill="#202226" />
        <rect x="17" y="15" width="20" height="11" fill="#e9edf8" />
        <rect x="0" y="31" width="13" height="1.500" fill="#2d6fb8" />
        <path stroke="#4c4f56" strokeWidth=".8" d="M2 6h8M2 9h7M2 12h9M2 15h6M2 18h8M2 21h7M2 24h8M2 27h6M2 35h8M2 38h7M17 6h24M17 9h18M17 12h28M17 29h34M17 32h28M17 35h32M60 7h12M60 11h10M60 16h12M60 20h9M60 26h12M60 30h8" />
        <path stroke="#c8a27c" strokeWidth="2" strokeDasharray="2 5" d="M58.500 6v32" />
      </svg>
      <div className="absolute bottom-[-15px] right-[1px]"><Slack id="slack-mini" size="h-[25px] w-[25px]" /></div>
    </div>
  );
}

function MiniDiscord() {
  return (
    <div className="relative mr-[3px]">
      <svg viewBox="0 0 77 44" className="h-[44px] w-[77px]">
        <rect width="77" height="44" fill="#35373c" />
        <rect width="4" height="44" fill="#1f2023" /><rect x="4" width="15" height="44" fill="#2c2e32" /><rect x="63" width="14" height="44" fill="#2c2e32" />
        <path stroke="#585b61" strokeWidth=".8" d="M7 2h8M7 6h6M7 10h8M7 14h6M7 18h7M7 22h8M7 26h6M7 30h8M24 2h8M55 2h6M22 41h38M67 5h7M67 9h6M67 13h7M67 17h5M67 21h7M67 25h6" />
        <path stroke="#d08a6a" strokeWidth="1.500" strokeDasharray="2 4" d="M65 4v26M2 4v32" />
        <path stroke="#fff" strokeWidth="1.200" d="M36 34h9M33 36.500h15" />
      </svg>
      <div className="absolute bottom-[-15px] right-[1px]"><Discord box="h-[25px] w-[25px] rounded-[5px]" glyph="h-[18px] w-[18px]" /></div>
    </div>
  );
}

function Trash() {
  return (
    <svg viewBox="0 0 60 76" className="mb-1 mr-[5px] h-[76px] w-[60px]">
      <defs>
        <linearGradient id="bin" x1="0" x2="1" y1="0" y2="0">
          <stop offset="0" stopColor="#7c7e82" /><stop offset=".3" stopColor="#5d5f63" /><stop offset=".7" stopColor="#6c6e72" /><stop offset="1" stopColor="#929498" />
        </linearGradient>
      </defs>
      <path fill="url(#bin)" d="M0 15 60 15 53 70q-6 6-23 6T7 70z" />
      <path fill="#3b3d41" d="M0 13q0-6 30-6t30 6q-2 12-30 12T0 13z" />
      <path fill="#e9eaec" d="m4 12 1-7 8 3 7-7 6 6 8-6 6 3 6-2 4 6 7 0-3 12q-8 5-24 5T6 20z" />
      <path fill="#4a5968" d="m12 10 6 2-5 6zM33 5l4 8-8 3zM46 8l5 4-6 5z" />
      <path fill="#56a8a0" d="m20 11 9 3-7 6z" />
      <path fill="#c9604c" d="m39 14 4 5h-7z" />
      <path fill="#d9b060" d="m24 8 4 2-4 2z" />
      <path fill="none" stroke="#a9abae" strokeWidth="1.200" d="M0 13q2 12 30 12t30-12" />
    </svg>
  );
}

/* [icon, running] */
const apps = [
  [<Finder />, true], [<Launchpad />, false], [<Chrome />, true], [<Terminal />, true], [<Slack />, true],
  [<VsCode />, true], [<Insomnia />, true], [<Safari />, false], [<Mail />, true], [<Zoom />, true],
  [<FaceTime />, false], [<Discord />, true], [<Reminders />, false], [<Calendar />, false], [<Music />, false],
  [<Warhammer />, false], [<Notes />, true], [<AppStore />, false], [<Photos />, false], [<Settings />, false], [<Spotify />, true],
];
const recents = [[<Preview />, true], [<QuickTime />, false], [<Messages />, true]];
const windows = [[<Zip />], [<MiniPreview />], [<MiniInsomnia />], [<MiniSpotify />], [<MiniSlack />], [<MiniDiscord />], [<Trash />]];

function Slots({ items }) {
  return items.map(([icon, running], i) => (
    <div key={i} className="flex w-[85.6px] flex-col items-center">
      <div className="flex h-[90px] items-center pt-1">{icon}</div>
      {running && <span className="h-2 w-2 rounded-full bg-[#a78fc0]" />}
    </div>
  ));
}

function Dock() {
  return (
    <div className="ml-[69px] mt-2 flex h-[104px] w-[2743px] rounded-[36px] border-2 border-[#463a5c] bg-[linear-gradient(90deg,#1d1433_0%,#1c122e_45%,#23143f_55%,#3b1358_68%,#3f145c_76%,#2c1448_83%,#20153c_92%,#1e1438_100%)] pl-[3px]">
      <Slots items={apps} />
      <div className="flex w-[40px] justify-center"><div className="mt-3 h-[76px] w-[2px] bg-[#6d4a8a]" /></div>
      <Slots items={recents} />
      <div className="flex w-[41px] justify-center"><div className="mt-3 h-[76px] w-[2px] bg-[#6d4a8a]" /></div>
      <Slots items={windows} />
    </div>
  );
}

export default function App() {
  return (
    <div className="flex h-[1800px] w-[2880px] flex-col overflow-hidden bg-[linear-gradient(90deg,#0c0428_0%,#0b032c_35%,#150545_62%,#3a0a66_67%,#2c0858_80%,#14043a_90%,#100338_100%)] font-[Inter,sans-serif]">
      <div className="bg-[linear-gradient(90deg,#2a0c58,#10062c_50%,#1c0a66)]">
        <MenuBar />
        <div className="h-px bg-black" />
        <div className="bg-[linear-gradient(to_bottom,transparent_50%,#050114_50%)]">
          <div className="relative flex h-[1628px] flex-col overflow-hidden rounded-[20px] shadow-[0_12px_20px_#050114]">
            <TabStrip />
            <div className="h-[138px] border-b-2 border-[#5f6368] bg-[#35363a] pt-2">
              <Toolbar />
              <BookmarkBar />
            </div>
            <Page />
            <div className="pointer-events-none absolute inset-0 rounded-[20px] border-2 border-white/25" />
          </div>
        </div>
      </div>
      <Dock />
    </div>
  );
}
